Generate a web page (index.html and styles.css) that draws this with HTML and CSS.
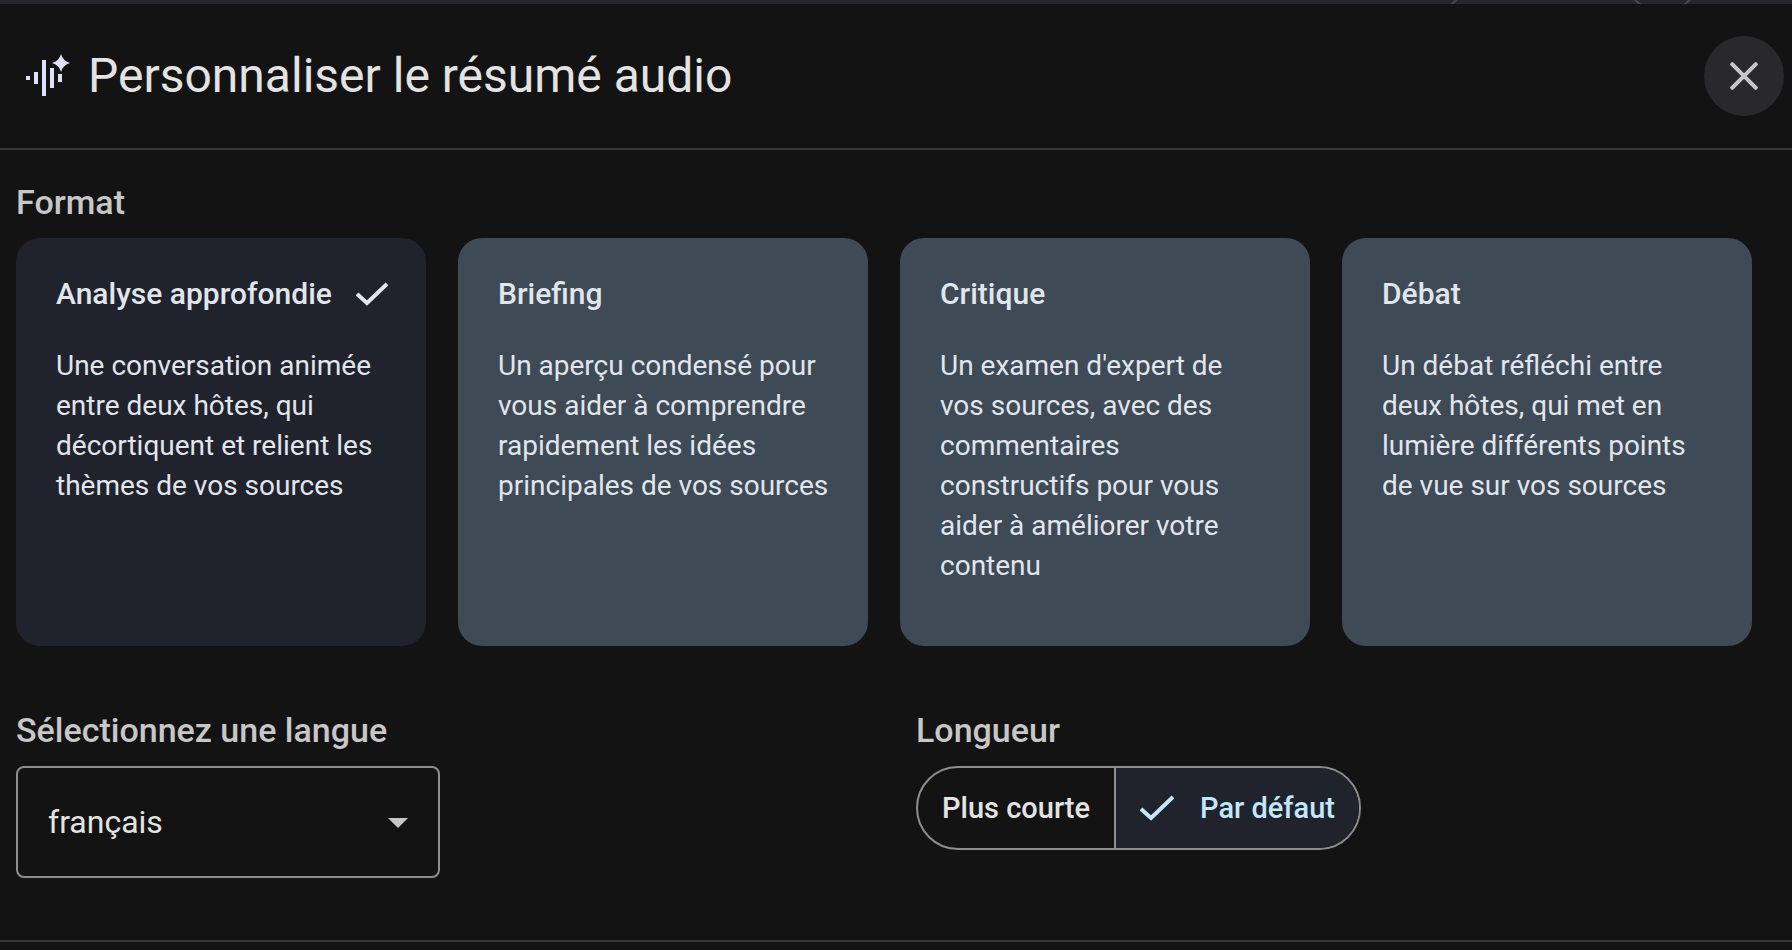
FILE: index.html
```html
<!DOCTYPE html>
<html lang="fr">
<head>
    <meta charset="UTF-8">
    <title>Personnaliser le résumé audio</title>
    <link rel="stylesheet" href="styles.css">
</head>
<body>
<div class="backdrop">
    <svg width="352" height="4" viewBox="0 0 352 4" fill="none" stroke="#48484a" stroke-width="2">
        <path d="M11 5 17 -1M194 -1l7 6M244 5l7-6"/>
    </svg>
</div>
<div class="dialog">
    <header class="header">
        <svg class="logo" width="48" height="48" viewBox="0 0 48 48" fill="#dfe0ff">
            <path d="M2 22h4v4H2zM10 18h4v12h-4zM18 6h4v36h-4zM26 14h4v20h-4zM34 20h4v8h-4z"/>
            <path d="M37 0q2 7 9 9-7 2-9 9-2-7-9-9 7-2 9-9z"/>
        </svg>
        <h1>Personnaliser le résumé audio</h1>
        <button class="close" type="button" aria-label="Fermer">
            <svg width="28" height="28" viewBox="0 0 28 28" fill="none" stroke="#c7c7c7" stroke-width="4">
                <path d="M1 1l26 26M27 1L1 27"/>
            </svg>
        </button>
    </header>

    <form class="content">
        <fieldset class="formats">
            <legend class="label">Format</legend>
            <div class="cards">
                <label class="card">
                    <input type="radio" name="format" checked>
                    <span class="card-title">Analyse approfondie
                        <svg width="32" height="24" viewBox="0 0 32 24" fill="none" stroke="currentColor" stroke-width="4">
                            <path d="M1 12l10 9L31 2"/>
                        </svg>
                    </span>
                    <span class="card-text">Une conversation animée entre deux hôtes, qui décortiquent et relient les thèmes de vos sources</span>
                </label>
                <label class="card">
                    <input type="radio" name="format">
                    <span class="card-title">Briefing</span>
                    <span class="card-text">Un aperçu condensé pour vous aider à comprendre rapidement les idées principales de vos sources</span>
                </label>
                <label class="card">
                    <input type="radio" name="format">
                    <span class="card-title">Critique</span>
                    <span class="card-text">Un examen d'expert de vos&nbsp;sources, avec des commentaires constructifs pour vous aider à améliorer votre contenu</span>
                </label>
                <label class="card">
                    <input type="radio" name="format">
                    <span class="card-title">Débat</span>
                    <span class="card-text">Un débat réfléchi entre deux hôtes, qui met en lumière différents points de vue sur vos sources</span>
                </label>
            </div>
        </fieldset>

        <div class="options">
            <div class="option">
                <label class="label" for="langue">Sélectionnez une langue</label>
                <div class="select">
                    <select id="langue">
                        <option>français</option>
                    </select>
                    <svg width="20" height="10" viewBox="0 0 20 10" fill="#c7c7c7">
                        <path d="M0 0h20L10 10z"/>
                    </svg>
                </div>
            </div>
            <fieldset class="option">
                <legend class="label">Longueur</legend>
                <div class="toggle">
                    <label>
                        <input type="radio" name="longueur">
                        Plus courte
                    </label>
                    <label>
                        <input type="radio" name="longueur" checked>
                        <svg width="34" height="26" viewBox="0 0 34 26" fill="none" stroke="currentColor" stroke-width="4">
                            <path d="M1 14l10 9L33 2"/>
                        </svg>
                        Par défaut
                    </label>
                </div>
            </fieldset>
        </div>
    </form>
</div>
</body>
</html>
```
FILE: styles.css
```css
*{
    margin: 0;
    padding: 0;
    box-sizing: border-box;
}
body{
    background: #131314;
    color: #e3e3e3;
    font-family: Roboto, "Liberation Sans", sans-serif;
}
svg{
    display: block;
    flex: none;
}
fieldset{
    border: none;
    min-width: 0;
}
.backdrop{
    display: flex;
    justify-content: flex-end;
    height: 4px;
    background: #272729;
}
.header{
    display: flex;
    align-items: center;
    height: 146px;
    padding: 0 8px 0 24px;
    border-bottom: 2px solid #37373a;
}
.logo{
    margin-top: 4px;
}
.header h1{
    flex: 1;
    margin-left: 16px;
    font-size: 48px;
    font-weight: 400;
    line-height: 64px;
}
.close{
    display: flex;
    align-items: center;
    justify-content: center;
    width: 80px;
    height: 80px;
    border: none;
    border-radius: 50%;
    background: #29292b;
    cursor: pointer;
}
.content{
    padding: 32px 40px 62px 16px;
    border-bottom: 2px solid #37373a;
}
.label{
    display: block;
    margin-bottom: 16px;
    color: #c7c7c7;
    font-size: 34px;
    font-weight: 500;
    line-height: 40px;
}

/* format */
.cards{
    display: grid;
    grid-template-columns: repeat(4, 1fr);
    gap: 32px;
}
.card{
    min-height: 408px;
    padding: 36px 36px 56px 40px;
    border-radius: 24px;
    background: #3e4a55;
    color: #e1e5ec;
    font-size: 28px;
    line-height: 40px;
    cursor: pointer;
}
.card:has(:checked){
    background: #20232c;
}
.card input, .toggle input{
    position: absolute;
    opacity: 0;
}
.card-title{
    display: flex;
    align-items: center;
    gap: 24px;
    margin-bottom: 32px;
    font-size: 30px;
    font-weight: 500;
    white-space: nowrap;
}
.card-text{
    display: block;
}

/* langue + longueur */
.options{
    display: grid;
    grid-template-columns: 1fr 1fr;
    gap: 64px;
    margin-top: 64px;
}
.select{
    position: relative;
    max-width: 424px;
}
.select select{
    width: 100%;
    height: 112px;
    padding: 0 64px 0 30px;
    border: 2px solid #8e8e90;
    border-radius: 8px;
    background: none;
    color: #e3e3e3;
    font: inherit;
    font-size: 32px;
    appearance: none;
}
.select svg{
    position: absolute;
    top: 52px;
    right: 32px;
    pointer-events: none;
}
.toggle{
    display: inline-flex;
    height: 84px;
    border: 2px solid #8e8e90;
    border-radius: 42px;
    overflow: hidden;
}
.toggle label{
    display: flex;
    align-items: center;
    gap: 26px;
    padding: 0 24px;
    font-size: 29px;
    font-weight: 500;
    cursor: pointer;
}
.toggle label + label{
    border-left: 2px solid #8e8e90;
}
.toggle label:has(:checked){
    background: #20232c;
    color: #c2e7ff;
}
```
